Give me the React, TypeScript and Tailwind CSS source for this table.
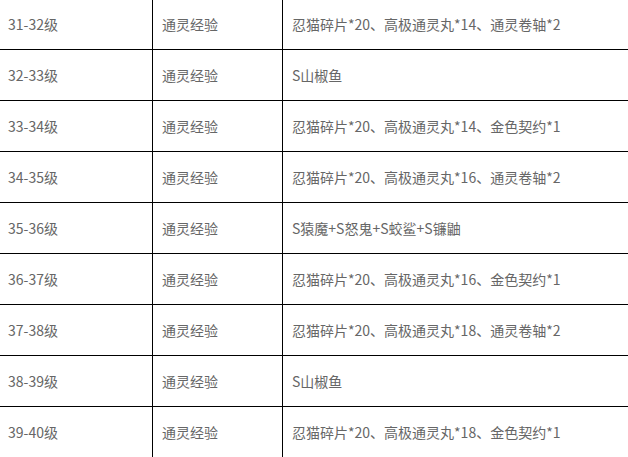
const rows: [string, string, string][] = [
  ["31-32级", "通灵经验", "忍猫碎片*20、高极通灵丸*14、通灵卷轴*2"],
  ["32-33级", "通灵经验", "S山椒鱼"],
  ["33-34级", "通灵经验", "忍猫碎片*20、高极通灵丸*14、金色契约*1"],
  ["34-35级", "通灵经验", "忍猫碎片*20、高极通灵丸*16、通灵卷轴*2"],
  ["35-36级", "通灵经验", "S猿魔+S怒鬼+S蛟鲨+S镰鼬"],
  ["36-37级", "通灵经验", "忍猫碎片*20、高极通灵丸*16、金色契约*1"],
  ["37-38级", "通灵经验", "忍猫碎片*20、高极通灵丸*18、通灵卷轴*2"],
  ["38-39级", "通灵经验", "S山椒鱼"],
  ["39-40级", "通灵经验", "忍猫碎片*20、高极通灵丸*18、金色契约*1"],
];

export default function App() {
  return (
    <div
      className="h-[457px] w-[628px] overflow-hidden bg-white text-[14px] text-[#666]"
      style={{ fontFamily: '"Noto Sans CJK SC", "Noto Sans", sans-serif' }}
    >
      <div className="-mt-[2px] w-[760px]">
        {rows.map(([level, kind, reward], i) => (
          <div key={i} className="flex h-[51px] border-t border-black">
            <div className="flex w-[153px] shrink-0 items-center border-r border-black pl-[8px]">{level}</div>
            <div className="flex w-[130px] shrink-0 items-center border-r border-black pl-[9px]">{kind}</div>
            <div className="flex flex-1 items-center pl-[9px]">{reward}</div>
          </div>
        ))}
      </div>
    </div>
  );
}
